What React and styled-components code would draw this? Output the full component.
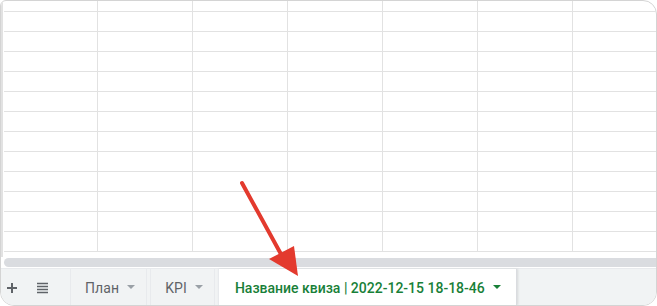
import styled, { createGlobalStyle } from "styled-components";

const GlobalStyle = createGlobalStyle`
  html, body {
    margin: 0;
    padding: 0;
    background: #ffffff;
  }
  * {
    box-sizing: border-box;
  }
`;

const ROWS = 13;
const COLS = 7;

const App = () => {
  return (
    <>
      <GlobalStyle />
      <Frame>
        <Sheet>
          <Grid>
            {Array.from({ length: ROWS * COLS }).map((_, i) => (
              <Cell key={i} />
            ))}
          </Grid>
        </Sheet>
        <ScrollTrack>
          <ScrollThumb />
        </ScrollTrack>
        <TabBar>
          <IconButton aria-label="add sheet">
            <svg width="12" height="12" viewBox="0 0 12 12">
              <path d="M6 1v10M1 6h10" stroke="#5f6368" strokeWidth="2" />
            </svg>
          </IconButton>
          <IconButton aria-label="all sheets">
            <svg width="11" height="12" viewBox="0 0 11 12">
              <path
                d="M0 1.5h11M0 4.5h11M0 7.5h11M0 10.5h11"
                stroke="#5f6368"
                strokeWidth="1.6"
              />
            </svg>
          </IconButton>
          <Tabs>
            <Tab>
              План <Caret />
            </Tab>
            <Tab>
              KPI <Caret />
            </Tab>
            <Tab $active>
              Название квиза | 2022-12-15 18-18-46 <Caret $active />
            </Tab>
          </Tabs>
        </TabBar>
        <Arrow width="657" height="306" viewBox="0 0 657 306">
          <line
            x1="242"
            y1="183"
            x2="282"
            y2="256"
            stroke="#e33a2e"
            strokeWidth="4"
            strokeLinecap="round"
          />
          <polygon points="269,259 294,246 298,276" fill="#e33a2e" />
        </Arrow>
      </Frame>
    </>
  );
};

const Caret = styled.span`
  display: inline-block;
  width: 0;
  height: 0;
  margin-left: 8px;
  border-left: 4px solid transparent;
  border-right: 4px solid transparent;
  border-top: 4px solid ${(p) => (p.$active ? "#188038" : "#9aa0a6")};
  transform: translateY(-1px);
`;

const Frame = styled.div`
  position: relative;
  width: 657px;
  height: 306px;
  border: 1px solid #d4d4d4;
  border-radius: 6px 14px 14px 14px;
  overflow: hidden;
  display: flex;
  flex-direction: column;
  background: #ffffff;
  font-family: Roboto, "Liberation Sans", sans-serif;
`;

const Sheet = styled.div`
  height: 256px;
  overflow: hidden;
  border-left: 2px solid #e2e2e2;
  padding-left: 1px;
`;

const Grid = styled.div`
  display: grid;
  grid-template-columns: 94px repeat(5, 95px) 90px;
  grid-template-rows: 11px repeat(12, 20px);
`;

const Cell = styled.div`
  border-right: 1px solid #e2e2e2;
  border-bottom: 1px solid #e2e2e2;
`;

const ScrollTrack = styled.div`
  height: 11px;
  padding: 1px 0 0 3px;
  background: #ffffff;
`;

const ScrollThumb = styled.div`
  height: 9px;
  background: #dadce0;
  border-radius: 5px 0 0 5px;
`;

const TabBar = styled.div`
  flex: 1;
  display: flex;
  align-items: stretch;
  gap: 8px;
  background: #f1f3f4;
  border-top: 1px solid #e8eaed;
`;

const IconButton = styled.div`
  width: 22px;
  display: flex;
  align-items: center;
  justify-content: center;
  padding-top: 2px;
`;

const Tabs = styled.div`
  display: flex;
  gap: 3px;
  margin-left: 9px;
`;

const Tab = styled.div`
  display: flex;
  align-items: center;
  padding: 1px ${(p) => (p.$active ? "15px" : "11px")} 0
    ${(p) => (p.$active ? "16px" : "14px")};
  font-size: 14px;
  font-weight: ${(p) => (p.$active ? 500 : 400)};
  letter-spacing: ${(p) => (p.$active ? "0" : "0.1px")};
  color: ${(p) => (p.$active ? "#188038" : "#5f6368")};
  background: ${(p) => (p.$active ? "#ffffff" : "#f1f3f4")};
  border-left: 1px solid #e8eaed;
  border-right: 1px solid ${(p) => (p.$active ? "#dadce0" : "#e8eaed")};
  box-shadow: ${(p) => (p.$active ? "1px 0 2px rgba(60,64,67,0.15)" : "none")};
  white-space: nowrap;
`;

const Arrow = styled.svg`
  position: absolute;
  left: -1px;
  top: -1px;
  pointer-events: none;
`;

export default App;
